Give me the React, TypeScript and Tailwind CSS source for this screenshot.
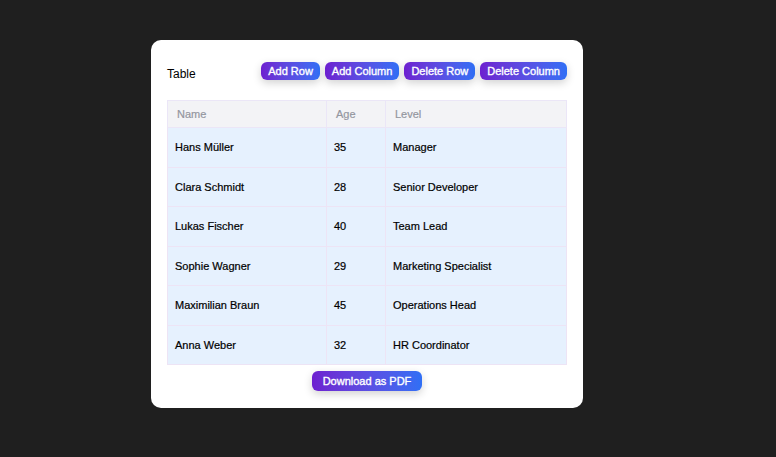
import { useState } from "react"

type Row = { name: string; age: string; level: string }

const initialRows: Row[] = [
  { name: "Hans Müller", age: "35", level: "Manager" },
  { name: "Clara Schmidt", age: "28", level: "Senior Developer" },
  { name: "Lukas Fischer", age: "40", level: "Team Lead" },
  { name: "Sophie Wagner", age: "29", level: "Marketing Specialist" },
  { name: "Maximilian Braun", age: "45", level: "Operations Head" },
  { name: "Anna Weber", age: "32", level: "HR Coordinator" },
]

const btn =
  "rounded-md bg-gradient-to-r from-[#6d1fd0] to-[#2f6ff5] text-white text-[11px] font-normal leading-none [-webkit-text-stroke:0.35px_white] shadow-[0_3px_8px_rgba(0,0,0,0.18)]"

export default function App() {
  const [rows] = useState(initialRows)

  return (
    <div className="w-full min-h-[457px] bg-[#1f1f1f] pt-10 font-['Liberation_Sans',Arial,sans-serif]">
      <div className="ml-[151px] w-[432px] bg-white rounded-[10px] px-4 pt-[22px] pb-[17px]">
        {/* Header */}
        <div className="flex items-center justify-between h-[18px] mb-[20px]">
          <span className="text-[12px] text-black mt-[5px]">Table</span>
          <div className="flex gap-[5px]">
            <button className={btn + " h-[18px] px-[7px]"}>Add Row</button>
            <button className={btn + " h-[18px] px-[7px]"}>Add Column</button>
            <button className={btn + " h-[18px] px-[7px]"}>Delete Row</button>
            <button className={btn + " h-[18px] px-[7px]"}>Delete Column</button>
          </div>
        </div>

        {/* Table */}
        <table className="w-[400px] border-collapse text-[11px] table-fixed">
          <colgroup>
            <col className="w-[159px]" />
            <col className="w-[59px]" />
            <col />
          </colgroup>
          <thead>
            <tr className="bg-[#f3f3f6] h-[27px]">
              <th className="border border-[#ebe6f7] text-left font-normal text-[#94969f] pl-[9px] [-webkit-text-stroke:0.2px_#94969f]">Name</th>
              <th className="border border-[#ebe6f7] text-left font-normal text-[#94969f] pl-[9px] [-webkit-text-stroke:0.2px_#94969f]">Age</th>
              <th className="border border-[#ebe6f7] text-left font-normal text-[#94969f] pl-[9px] [-webkit-text-stroke:0.2px_#94969f]">Level</th>
            </tr>
          </thead>
          <tbody>
            {rows.map((r) => (
              <tr key={r.name} className="bg-[#e6f1fe] h-[39.5px]">
                <td className="border border-[#ede4f5] pl-[7px] text-black [-webkit-text-stroke:0.2px_black]">{r.name}</td>
                <td className="border border-[#ede4f5] pl-[7px] text-black [-webkit-text-stroke:0.2px_black]">{r.age}</td>
                <td className="border border-[#ede4f5] pl-[7px] text-black [-webkit-text-stroke:0.2px_black]">{r.level}</td>
              </tr>
            ))}
          </tbody>
        </table>

        {/* Footer */}
        <div className="flex justify-center mt-[6px]">
          <button className={btn + " h-[20px] px-[11px]"}>Download as PDF</button>
        </div>
      </div>
    </div>
  )
}
